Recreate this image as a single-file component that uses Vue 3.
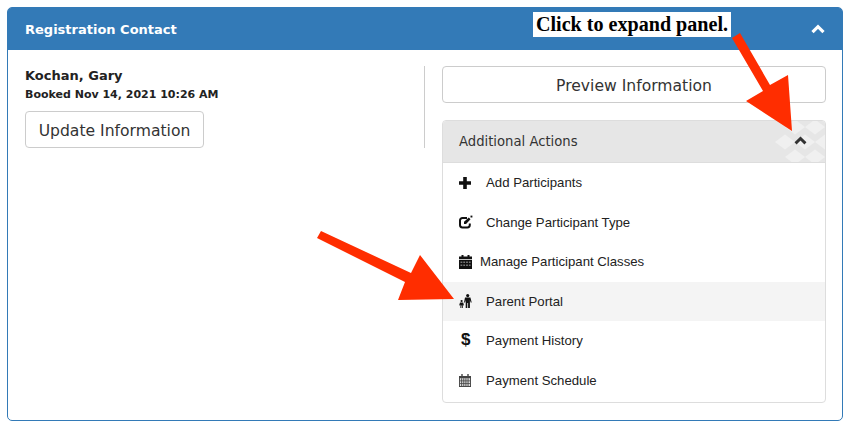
<script setup>
const actions = [
  { label: 'Add Participants', icon: 'plus' },
  { label: 'Change Participant Type', icon: 'edit' },
  { label: 'Manage Participant Classes', icon: 'calendar', tight: true },
  { label: 'Parent Portal', icon: 'family', active: true },
  { label: 'Payment History', icon: 'dollar' },
  { label: 'Payment Schedule', icon: 'schedule' }
];

// light diamonds behind the collapse button, centres in px from the box corner
const diamonds = [
  [20, 6], [40, 6],
  [10, 21], [30, 21], [50, 21],
  [20, 36], [40, 36]
];
</script>

<template>
  <main class="page">
    <section class="panel">
      <header class="panel-head">
        <h2>Registration Contact</h2>
        <svg class="chevron" viewBox="0 0 14 10" width="14" height="10">
          <path d="M1.5 8.2 7 2.7 12.5 8.2" fill="none" stroke="#fff" stroke-width="3.2" />
        </svg>
      </header>

      <div class="panel-body">
        <div class="contact">
          <div class="name">Kochan, Gary</div>
          <div class="booked">Booked Nov 14, 2021 10:26 AM</div>
          <button class="btn update">Update Information</button>
        </div>

        <div class="side">
          <button class="btn preview">Preview Information</button>

          <div class="actions">
            <div class="actions-head">
              <span>Additional Actions</span>
              <svg class="checker" viewBox="0 0 50 41" width="50" height="41">
                <path
                  v-for="d in diamonds"
                  :key="d.join()"
                  :d="`M${d[0]} ${d[1] - 7.5}l10 7.5-10 7.5-10-7.5z`"
                  fill="#f0f0f0"
                />
              </svg>
              <svg class="chevron small" viewBox="0 0 14 10" width="13" height="9">
                <path d="M1.5 8.2 7 2.7 12.5 8.2" fill="none" stroke="#333" stroke-width="3.2" />
              </svg>
            </div>

            <ul class="action-list">
              <li v-for="item in actions" :key="item.label" :class="{ active: item.active, tight: item.tight }">
                <span class="icon">
                  <svg v-if="item.icon === 'plus'" viewBox="0 0 12 12" width="12" height="12">
                    <path d="M4.2 0h3.6v4.2H12v3.6H7.8V12H4.2V7.8H0V4.2h4.2z" fill="#111" />
                  </svg>
                  <svg v-else-if="item.icon === 'edit'" viewBox="0 0 14 14" width="14" height="14">
                    <path d="M10.8 8.5v1.6a2.4 2.4 0 0 1-2.4 2.4H3.4A2.4 2.4 0 0 1 1 10.100V5.400A2.400 2.400 0 0 1 3.400 3H8" fill="none" stroke="#111" stroke-width="2" />
                    <path d="M5 6.800 9.800 2.600l1.700 1.600-4.400 4.700H5z" fill="#111" />
                    <path d="M11.500 .6h1.900v1.900h-1.900z" fill="#111" />
                  </svg>
                  <svg v-else-if="item.icon === 'calendar'" viewBox="0 0 13 14" width="13" height="14">
                    <path d="M2.500 0h2v1.500h4V0h2v1.500H13v2.800H0V1.500h2.500z" fill="#111" />
                    <path d="M0 5h13v9H0z" fill="#111" />
                    <path d="M1.500 6.500h1.800v1.400H1.500zM4.300 6.500h1.800v1.400H4.300zM7.100 6.500h1.800v1.400H7.100zM9.900 6.500h1.700v1.400H9.900zM1.500 9.500h1.800v1.400H1.500zM4.300 9.500h1.800v1.400H4.300zM7.100 9.500h1.800v1.400H7.100zM9.900 9.500h1.700v1.400H9.900z" fill="#777" />
                  </svg>
                  <svg v-else-if="item.icon === 'family'" viewBox="0 0 13 14" width="13" height="14">
                    <circle cx="8.700" cy="1.600" r="1.600" fill="#111" />
                    <path d="M6 3.600h5.400l1.300 4.800-1 .2-.8-2.600V14H9.100V9H8.300v5H6.700V6L6 8.600l-1-.2z" fill="#111" />
                    <circle cx="2.600" cy="7" r="1.100" fill="#111" />
                    <path d="M1 8.500h3.200l.7 2.700-.8.200-.3-1V14H2.900v-2.500h-.6V14H1.400v-3.600l-.4 1-.8-.2z" fill="#111" />
                  </svg>
                  <span v-else-if="item.icon === 'dollar'" class="dollar">$</span>
                  <svg v-else viewBox="0 0 13 14" width="12" height="13">
                    <path d="M2.500 0H4v2h5V0h1.500v2H13v12H0V2h2.500z" fill="#444" />
                    <path d="M1 4.500h11V13H1z" fill="#ddd" />
                    <path d="M2.400 4.500h1v8.500h-1zM4.700 4.500h1v8.500h-1zM7 4.500h1v8.500H7zM9.300 4.500h1v8.500h-1zM1 7h11v.8H1zM1 10h11v.8H1z" fill="#444" />
                  </svg>
                </span>
                <span class="label">{{ item.label }}</span>
              </li>
            </ul>
          </div>
        </div>
      </div>
    </section>

    <div class="callout">Click to expand panel.</div>
    <svg class="arrows" viewBox="0 0 850 431" width="850" height="431">
      <polygon points="732,38 740,33 770,85 788,75 792,131 746,101 763,91" fill="#ff2d00" />
      <polygon points="321,231 317,238 405,282 398,300 454,299 420,255 411,273" fill="#ff2d00" />
    </svg>
  </main>
</template>

<style scoped>
.page {
  position: relative;
  width: 850px;
  height: 431px;
  padding: 7px;
  box-sizing: border-box;
  background: #fff;
  overflow: hidden;
  font-family: "DejaVu Sans", Verdana, sans-serif;
  color: #333;
}

.panel {
  width: 836px;
  height: 414px;
  box-sizing: border-box;
  border: 1px solid #337ab7;
  border-radius: 5px;
}

.panel-head {
  height: 42px;
  display: flex;
  align-items: center;
  justify-content: space-between;
  padding: 0 17px;
  background: #337ab7;
  border-radius: 3px 3px 0 0;
}

.panel-head h2 {
  margin: 0;
  font-size: 13px;
  font-weight: 700;
  color: #fff;
}

.panel-body {
  display: flex;
  padding: 16px 16px 0 17px;
}

.contact {
  width: 400px;
  height: 82px;
  padding-top: 1px;
  border-right: 1px solid #ccc;
  box-sizing: border-box;
}

.name {
  font-size: 13px;
  font-weight: 700;
  line-height: 18px;
  color: #222;
}

.booked {
  margin-top: 2px;
  font-size: 11px;
  font-weight: 700;
  line-height: 16px;
  color: #222;
}

.btn {
  display: block;
  box-sizing: border-box;
  height: 37px;
  background: #fff;
  border: 1px solid #ccc;
  border-radius: 4px;
  font-family: inherit;
  font-size: 15.6px;
  color: #333;
  padding: 2px 0 0;
}

.update {
  width: 179px;
  margin-top: 8px;
}

.side {
  width: 384px;
  margin-left: 17px;
}

.preview {
  width: 100%;
}

.actions {
  margin-top: 17px;
  border: 1px solid #ddd;
  border-radius: 4px;
  height: 283px;
  box-sizing: border-box;
}

.actions-head {
  position: relative;
  height: 41px;
  display: flex;
  align-items: center;
  padding-left: 16px;
  background: #e6e6e6;
  border-bottom: 1px solid #ddd;
  border-radius: 3px 3px 0 0;
  font-size: 13.2px;
}

.checker {
  position: absolute;
  right: 0;
  top: 0;
}

.chevron.small {
  position: absolute;
  right: 18px;
  top: 15px;
}

.action-list {
  list-style: none;
  margin: 0;
  padding: 0;
}

.action-list li {
  height: 39.5px;
  display: flex;
  align-items: center;
  padding-left: 16px;
  font-family: "Liberation Sans", Arial, sans-serif;
  font-size: 13.2px;
  color: #222;
}

.action-list li.active {
  background: #f4f4f4;
}

.icon {
  width: 27px;
  display: flex;
  align-items: center;
}

.tight .icon {
  width: 21px;
}

.dollar {
  font-size: 17px;
  font-weight: 700;
  line-height: 16px;
  margin-left: 2px;
  margin-top: -2px;
  color: #111;
}

.callout {
  position: absolute;
  left: 533px;
  top: 12px;
  width: 198px;
  height: 25px;
  background: #fff;
  font-family: "Liberation Serif", "Times New Roman", serif;
  font-size: 20.1px;
  font-weight: 700;
  line-height: 25px;
  text-align: center;
  color: #000;
}

.arrows {
  position: absolute;
  left: 0;
  top: 0;
  pointer-events: none;
}
</style>
